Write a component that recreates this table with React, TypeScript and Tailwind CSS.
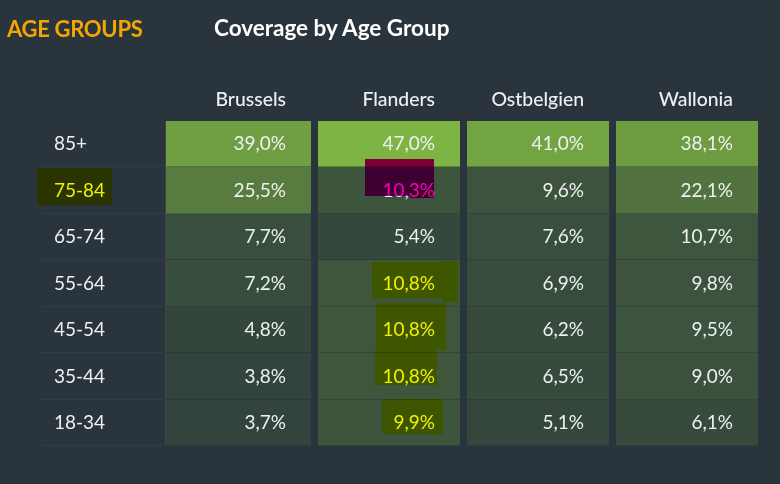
import React from "react";

const cols = ["Brussels", "Flanders", "Ostbelgien", "Wallonia"];
const rows: { label: string; values: number[] }[] = [
  { label: "85+", values: [39.0, 47.0, 41.0, 38.1] },
  { label: "75-84", values: [25.5, 10.3, 9.6, 22.1] },
  { label: "65-74", values: [7.7, 5.4, 7.6, 10.7] },
  { label: "55-64", values: [7.2, 10.8, 6.9, 9.8] },
  { label: "45-54", values: [4.8, 10.8, 6.2, 9.5] },
  { label: "35-44", values: [3.8, 10.8, 6.5, 9.0] },
  { label: "18-34", values: [3.7, 9.9, 5.1, 6.1] },
];

const lo = [44, 58, 59];
const hi = [125, 180, 67];
function cellColor(v: number) {
  const t = Math.max(0, Math.min(1, v / 47));
  const c = lo.map((l, i) => Math.round(l + (hi[i] - l) * t));
  return `rgb(${c[0]},${c[1]},${c[2]})`;
}
function fmt(v: number) {
  return v.toFixed(1).replace(".", ",") + "%";
}

const widths = ["w-[146px]", "w-[142px]", "w-[142px]", "w-[142px]"];

function Mark({ className, color }: { className: string; color: "y" | "m" }) {
  return (
    <div
      className={`absolute mix-blend-multiply pointer-events-none ${
        color === "y" ? "bg-[#ffff00]" : "bg-[#ff00c8]"
      } ${className}`}
    />
  );
}

export default function App() {
  return (
    <div
      className="relative w-[780px] h-[484px] bg-[#2a343c] text-[#eef0f1] overflow-hidden"
      style={{ fontFamily: "Lato, 'Open Sans', sans-serif" }}
    >
      <div className="flex items-center h-[56px] pl-[7px]">
        <div className="w-[207px] text-[22px] font-bold text-[#f5a500] tracking-[-0.3px]">AGE GROUPS</div>
        <div className="text-[22.5px] font-bold text-white">Coverage by Age Group</div>
      </div>
      <div className="ml-[41px] mt-[24px] w-[717px]">
        <div className="flex h-[41px] items-center pb-[4px] text-[19.4px] font-medium">
          <div className="w-[124px]" />
          {cols.map((c, i) => (
            <div key={c} className={`${widths[i]} ${i > 0 ? "ml-[7px]" : ""} text-right pr-[25px]`}>
              {c}
            </div>
          ))}
        </div>
        {rows.map((r) => (
          <div key={r.label} className="flex h-[46.43px] text-[19px]">
            <div className="w-[124px] flex items-center pl-[13px] border-b border-[#323c44]">
              {r.label}
            </div>
            {r.values.map((v, i) => (
              <div
                key={i}
                className={`${widths[i]} ${i > 0 ? "ml-[7px]" : "border-l border-[#3a464c]"} flex items-center justify-end pr-[25px] border-b border-b-[rgba(30,40,45,0.35)]`}
                style={{ backgroundColor: cellColor(v) }}
              >
                {fmt(v)}
              </div>
            ))}
          </div>
        ))}
      </div>

      {/* highlighter marks drawn over the table */}
      <Mark color="y" className="left-[37px] top-[168px] w-[75px] h-[37px]" />
      <Mark color="m" className="left-[365px] top-[159px] w-[69px] h-[37px]" />
      <Mark color="m" className="left-[410px] top-[190px] w-[24px] h-[8px]" />
      <Mark color="y" className="left-[372px] top-[262px] w-[70px] h-[36px]" />
      <Mark color="y" className="left-[442px] top-[261px] w-[16px] h-[41px]" />
      <Mark color="y" className="left-[376px] top-[303px] w-[70px] h-[47px]" />
      <Mark color="y" className="left-[375px] top-[350px] w-[62px] h-[35px]" />
      <Mark color="y" className="left-[382px] top-[399px] w-[61px] h-[35px]" />
    </div>
  );
}
